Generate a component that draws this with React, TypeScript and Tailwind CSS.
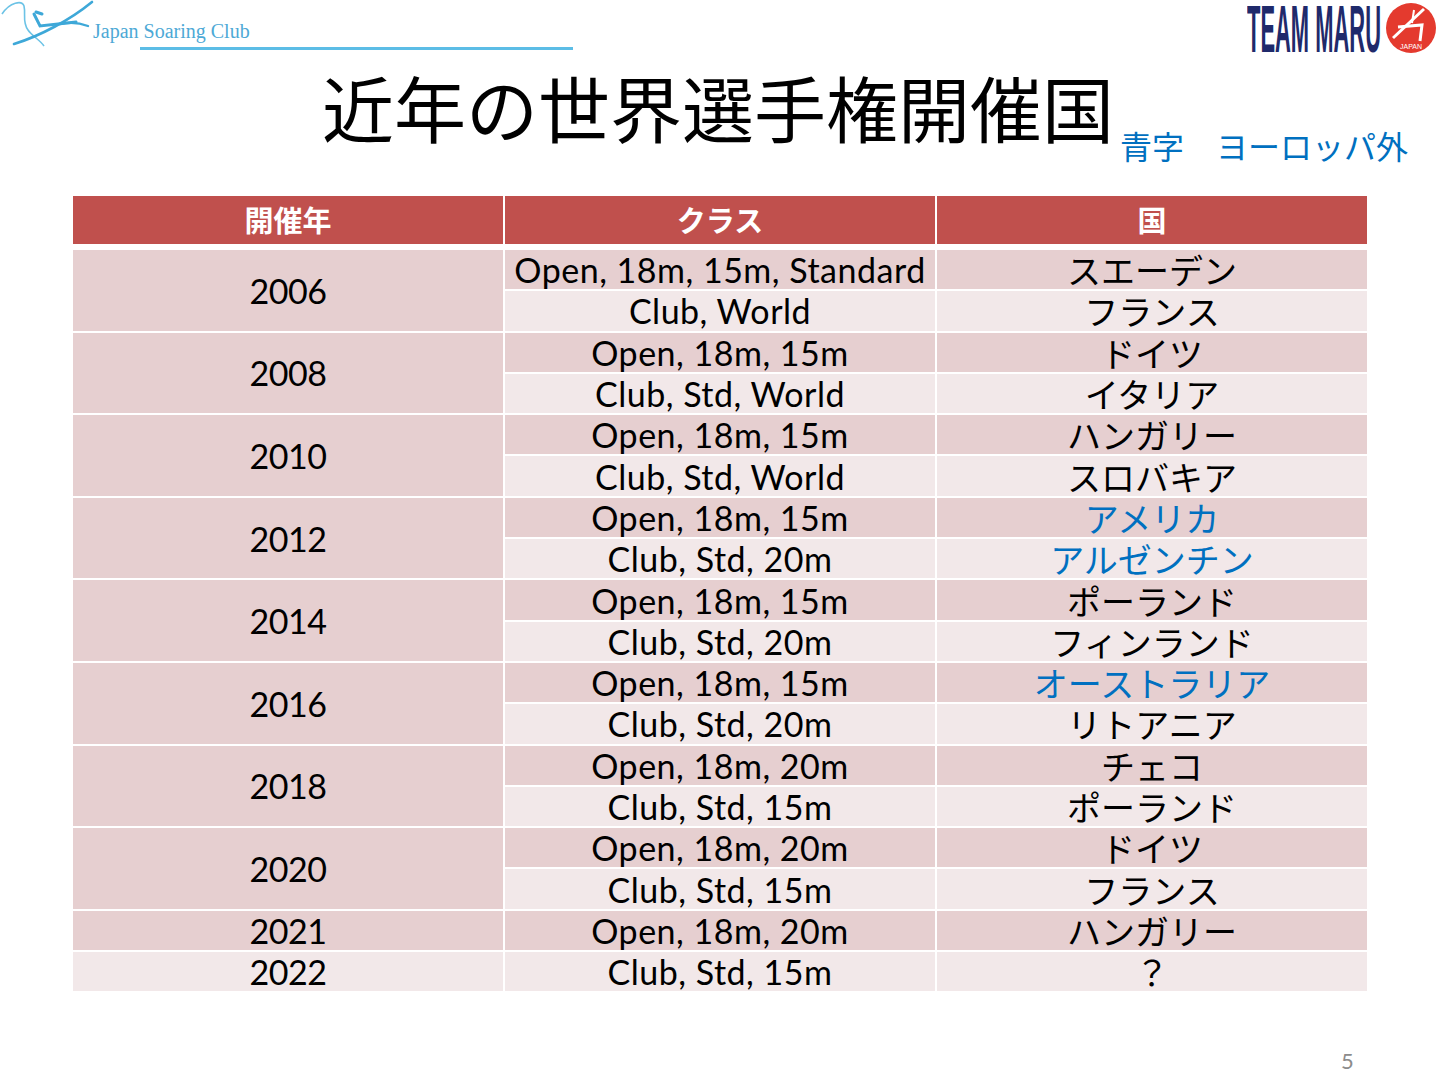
const jp = { fontFamily: '"Noto Sans CJK JP", "Noto Sans", sans-serif' };
const latin = { fontFamily: 'Lato, "Noto Sans CJK JP", sans-serif' };

type Sub = { cls: string; country: string; blue?: boolean };
type Group = { year: string; rows: Sub[]; light?: boolean };

const groups: Group[] = [
  { year: '2006', rows: [{ cls: 'Open, 18m, 15m, Standard', country: 'スエーデン' }, { cls: 'Club, World', country: 'フランス' }] },
  { year: '2008', rows: [{ cls: 'Open, 18m, 15m', country: 'ドイツ' }, { cls: 'Club, Std, World', country: 'イタリア' }] },
  { year: '2010', rows: [{ cls: 'Open, 18m, 15m', country: 'ハンガリー' }, { cls: 'Club, Std, World', country: 'スロバキア' }] },
  { year: '2012', rows: [{ cls: 'Open, 18m, 15m', country: 'アメリカ', blue: true }, { cls: 'Club, Std, 20m', country: 'アルゼンチン', blue: true }] },
  { year: '2014', rows: [{ cls: 'Open, 18m, 15m', country: 'ポーランド' }, { cls: 'Club, Std, 20m', country: 'フィンランド' }] },
  { year: '2016', rows: [{ cls: 'Open, 18m, 15m', country: 'オーストラリア', blue: true }, { cls: 'Club, Std, 20m', country: 'リトアニア' }] },
  { year: '2018', rows: [{ cls: 'Open, 18m, 20m', country: 'チェコ' }, { cls: 'Club, Std, 15m', country: 'ポーランド' }] },
  { year: '2020', rows: [{ cls: 'Open, 18m, 20m', country: 'ドイツ' }, { cls: 'Club, Std, 15m', country: 'フランス' }] },
  { year: '2021', rows: [{ cls: 'Open, 18m, 20m', country: 'ハンガリー' }] },
  { year: '2022', rows: [{ cls: 'Club, Std, 15m', country: '？' }], light: true },
];

function LeftLogo() {
  return (
    <div className="relative h-[52px] w-[580px]">
      <svg width="140" height="52" viewBox="0 0 140 52" className="absolute left-0 top-0">
        <path d="M2 14 C10 2 22 0 24 6 C26 14 22 22 28 30 C32 36 40 40 44 46" fill="none" stroke="#6cc3e6" strokeWidth="1.6" />
        <path d="M14 44 C40 36 70 20 92 2" fill="none" stroke="#3ea8d8" strokeWidth="2.6" strokeLinecap="round" />
        <path d="M34 14 L40 26 L76 22" fill="none" stroke="#3ea8d8" strokeWidth="3" strokeLinecap="round" />
        <path d="M36 12 L42 14" stroke="#3ea8d8" strokeWidth="3" strokeLinecap="round" />
        <path d="M60 24 C70 22 80 23 88 26" fill="none" stroke="#3ea8d8" strokeWidth="2.4" strokeLinecap="round" />
      </svg>
      <span className="absolute left-[93px] top-[21px] text-[20px] leading-none text-[#4da9d6]" style={{ fontFamily: '"Liberation Serif", serif' }}>
        Japan Soaring Club
      </span>
      <div className="absolute left-[140px] top-[47px] h-[3px] w-[433px] bg-[#5cbde6]" />
    </div>
  );
}

function RightLogo() {
  return (
    <div className="flex items-center gap-[3px] pt-[2px]">
      <svg width="134" height="52" viewBox="0 0 134 52">
        <text
          x="0"
          y="50"
          textLength="134"
          lengthAdjust="spacingAndGlyphs"
          fontSize="66"
          fontWeight="bold"
          fill="#1f2a6b"
          fontFamily="Liberation Sans, sans-serif"
        >
          TEAM MARU
        </text>
      </svg>
      <svg width="54" height="52" viewBox="0 0 54 52">
        <circle cx="27" cy="26" r="25" fill="#e43a2e" />
        <path d="M9 36 L40 7" stroke="#fff" strokeWidth="3" />
        <path d="M14 25 L38 23 L36 39" fill="none" stroke="#fff" strokeWidth="3" />
        <path d="M30 8 L28 21" stroke="#fff" strokeWidth="2" />
        <text x="27" y="47" textAnchor="middle" fontSize="7" fill="#fff" fontFamily="Liberation Sans, sans-serif">JAPAN</text>
      </svg>
    </div>
  );
}

function Cell({ children, dark, blue, span, year }: { children: React.ReactNode; dark: boolean; blue?: boolean; span?: boolean; year?: boolean }) {
  return (
    <div
      className={`flex items-center justify-center text-[34px] leading-[39px] ${year ? 'tracking-[-0.5px]' : 'tracking-[0.5px]'} ${dark ? 'bg-[#e6cfd0]' : 'bg-[#f2e8e9]'} ${blue ? 'text-[#0070c0]' : 'text-black'} ${span ? 'row-span-2' : ''}`}
      style={latin}
    >
      {children}
    </div>
  );
}

export default function App() {
  return (
    <div className="relative h-[1080px] w-[1440px] overflow-hidden bg-white">
      <div className="flex items-start justify-between pr-[2px]">
        <LeftLogo />
        <RightLogo />
      </div>

      <div className="mt-[12px] flex items-end pl-[322px]" style={jp}>
        <h1 className="text-[72px] font-normal leading-[80px] text-black">近年の世界選手権開催国</h1>
        <span className="mb-[-19px] ml-[6px] text-[32px] leading-[40px] text-[#0070c0]">青字　ヨーロッパ外</span>
      </div>

      <div className="ml-[73px] mt-[50px] w-[1294px]">
        <div className="grid h-[48px] grid-cols-3 gap-x-[2px]" style={jp}>
          {['開催年', 'クラス', '国'].map(h => (
            <div key={h} className="flex items-center justify-center bg-[#c0504d] text-[29px] font-bold text-white">
              {h}
            </div>
          ))}
        </div>
        <div className="mt-[6px] grid auto-rows-[39.3px] grid-cols-3 gap-[2px]">
          {groups.map(g => (
            <Group key={g.year} g={g} />
          ))}
        </div>
      </div>

      <span className="absolute left-[1341px] top-[1050px] text-[22px] leading-none text-[#8c8c8c]" style={latin}>
        5
      </span>
    </div>
  );
}

function Group({ g }: { g: Group }) {
  const span = g.rows.length > 1;
  return (
    <>
      {g.rows.map((r, i) => (
        <Row key={i} first={i === 0} g={g} r={r} span={span} dark={g.light ? false : i === 0} />
      ))}
    </>
  );
}

function Row({ first, g, r, span, dark }: { first: boolean; g: Group; r: Sub; span: boolean; dark: boolean }) {
  return (
    <>
      {first && (
        <Cell dark={!g.light} span={span} year>
          {g.year}
        </Cell>
      )}
      <Cell dark={dark}>{r.cls}</Cell>
      <Cell dark={dark} blue={r.blue}>
        <span className="tracking-normal" style={jp}>
          {r.country}
        </span>
      </Cell>
    </>
  );
}
